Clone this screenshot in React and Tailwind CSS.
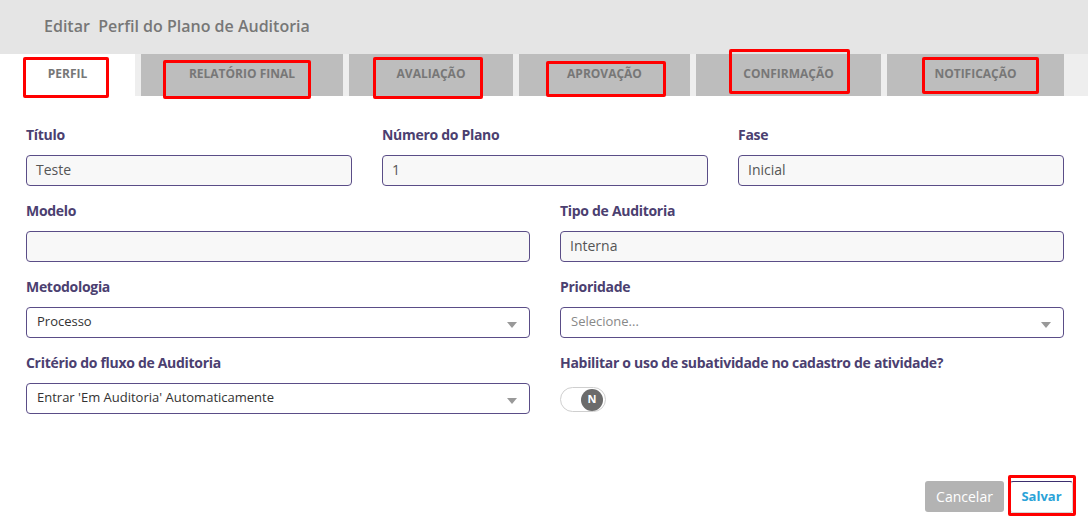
import React from 'react';

const tabs = [
  { label: 'PERFIL', w: 'w-[135px]' },
  { label: 'RELATÓRIO FINAL', w: 'w-[202px]' },
  { label: 'AVALIAÇÃO', w: 'w-[164px]' },
  { label: 'APROVAÇÃO', w: 'w-[171px]' },
  { label: 'CONFIRMAÇÃO', w: 'w-[185px]' },
  { label: 'NOTIFICAÇÃO', w: 'w-[177px]' },
];

// red annotation boxes drawn over the screenshot
const marks = [
  'left-[23px] top-[57px] w-[86px] h-[41px]',
  'left-[163px] top-[60px] w-[148px] h-[39px]',
  'left-[373px] top-[57px] w-[110px] h-[42px]',
  'left-[546px] top-[61px] w-[120px] h-[36px]',
  'left-[729px] top-[49px] w-[121px] h-[45px]',
  'left-[922px] top-[57px] w-[117px] h-[37px]',
  'left-[1008px] top-[475px] w-[68px] h-[41px]',
];

const Label = ({ children }) => (
  <div className="h-[18px] leading-[18px] text-[14px] font-bold tracking-[-0.3px] text-[#4b4070] mb-[11px] whitespace-nowrap">
    {children}
  </div>
);

const TextField = ({ label, value }) => (
  <div className="flex flex-col">
    <Label>{label}</Label>
    <div className="h-[31px] rounded-[4px] border border-[#5a4d87] bg-[#f8f8f8] px-[9px] pb-[2px] flex items-center text-[14px] text-[#555]">
      {value}
    </div>
  </div>
);

const SelectField = ({ label, value, placeholder }) => (
  <div className="flex flex-col">
    <Label>{label}</Label>
    <div className="h-[31px] rounded-[4px] border border-[#5a4d87] bg-white pl-[10px] pr-[12px] pb-[1px] flex items-center justify-between text-[13px]">
      <span className={placeholder ? 'text-[#888]' : 'text-[#333]'}>{value}</span>
      <span className="w-0 h-0 border-l-[5px] border-r-[5px] border-t-[6px] border-l-transparent border-r-transparent border-t-[#999] mt-[5px]" />
    </div>
  </div>
);

export default function App() {
  return (
    <div
      className="relative w-[1088px] h-[528px] bg-white flex flex-col overflow-hidden"
      style={{ fontFamily: '"Open Sans", "Noto Sans", sans-serif' }}
    >
      {/* Header */}
      <div className="h-[54px] bg-[#e5e5e5] pl-[44px] pb-[2px] flex items-center">
        <h1 className="text-[16px] font-semibold text-[#777] whitespace-pre">Editar  Perfil do Plano de Auditoria</h1>
      </div>

      {/* Tabs */}
      <div className="h-[42px] bg-[#eeeeee] flex gap-[6px]">
        {tabs.map((t, i) => (
          <div
            key={t.label}
            className={
              t.w +
              ' pb-[2px] flex items-center justify-center text-[12px] font-bold text-[#777] whitespace-nowrap ' +
              (i === 0 ? 'bg-white' : 'bg-[#bdbdbd]')
            }
          >
            {t.label}
          </div>
        ))}
      </div>

      {/* Form */}
      <div className="pt-[30px] pl-[26px] pr-[24px] flex flex-col gap-[16px]">
        <div className="grid grid-cols-3 gap-[30px]">
          <TextField label="Título" value="Teste" />
          <TextField label="Número do Plano" value="1" />
          <TextField label="Fase" value="Inicial" />
        </div>
        <div className="grid grid-cols-2 gap-[30px]">
          <TextField label="Modelo" value="" />
          <TextField label="Tipo de Auditoria" value="Interna" />
        </div>
        <div className="grid grid-cols-2 gap-[30px]">
          <SelectField label="Metodologia" value="Processo" />
          <SelectField label="Prioridade" value="Selecione..." placeholder />
        </div>
        <div className="grid grid-cols-2 gap-[30px]">
          <SelectField label="Critério do fluxo de Auditoria" value="Entrar 'Em Auditoria' Automaticamente" />
          <div className="flex flex-col">
            <Label>Habilitar o uso de subatividade no cadastro de atividade?</Label>
            <div className="mt-[4px] w-[46px] h-[25px] rounded-full border border-[#cfcfcf] bg-white flex items-center justify-end pr-[2px]">
              <div className="w-[22px] h-[22px] rounded-full bg-[#6b6b6b] text-white text-[11px] font-bold flex items-center justify-center">
                N
              </div>
            </div>
          </div>
        </div>
      </div>

      {/* Footer */}
      <div className="mt-auto pb-[15px] pr-[15px] flex justify-end gap-[6px]">
        <button className="w-[79px] h-[31px] rounded-[3px] bg-[#b3b3b3] text-white text-[14px] font-medium">Cancelar</button>
        <button className="w-[63px] h-[32px] rounded-[3px] bg-white border border-[#d6d6d6] border-t-[#3b2e6e] text-[#2ba3d8] text-[13px] font-bold">
          Salvar
        </button>
      </div>

      {marks.map((m) => (
        <div key={m} className={'absolute border-[3px] border-[#ff0000] rounded-[2px] pointer-events-none ' + m} />
      ))}
    </div>
  );
}
